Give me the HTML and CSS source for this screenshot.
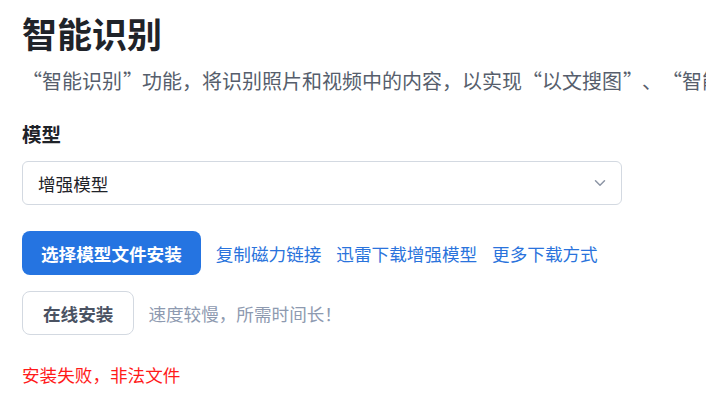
FILE: index.html
```html
<!DOCTYPE html>
<html lang="zh-CN">
<head>
<meta charset="utf-8">
<title>智能识别</title>
<link rel="stylesheet" href="styles.css">
</head>
<body>
<div class="page">
  <h1 class="title">智能识别</h1>
  <p class="desc"><span class="qo">“</span>智能识别<span class="qc">”</span>功能，将识别照片和视频中的内容，以实现<span class="qo">“</span>以文搜图<span class="qc">”</span>、<span class="qo">“</span>智能相册<span class="qc">”</span>等功能。</p>
  <div class="label">模型</div>
  <div class="select">
    <span class="select-value">增强模型</span>
    <svg class="chevron" width="12" height="8" viewBox="0 0 12 8"><path d="M1.5 1.8 L6 6.2 L10.5 1.8" fill="none" stroke="#8c95a5" stroke-width="1.5" stroke-linecap="round" stroke-linejoin="round"/></svg>
  </div>
  <div class="row row-primary">
    <button class="btn btn-primary">选择模型文件安装</button>
    <a class="link">复制磁力链接</a>
    <a class="link">迅雷下载增强模型</a>
    <a class="link">更多下载方式</a>
  </div>
  <div class="row row-secondary">
    <button class="btn btn-outline">在线安装</button>
    <span class="hint">速度较慢，所需时间长！</span>
  </div>
  <div class="error">安装失败，非法文件</div>
</div>
</body>
</html>
```

FILE: styles.css
```css
* { box-sizing: border-box; }
html, body { margin: 0; padding: 0; background: #ffffff; }
body {
  font-family: "Noto Sans CJK SC", "Noto Sans", sans-serif;
  font-size: 17.6px;
  color: #1f2329;
  overflow: hidden;
}
.page {
  padding: 12px 0 0 22px;
  display: flex;
  flex-direction: column;
}
.title {
  margin: 0;
  font-size: 35px;
  font-weight: 700;
  line-height: 41px;
  color: #1f2329;
}
.desc {
  margin: 15px 0 0 0;
  font-size: 20px;
  line-height: 26px;
  color: #565e6c;
  white-space: nowrap;
  overflow: hidden;
}
.qo, .qc {
  display: inline-block;
  width: 1em;
}
.qo { text-align: right; padding-right: 1px; }
.qc { text-align: left; padding-left: 1px; }
.label {
  margin-top: 27px;
  font-size: 19.5px;
  font-weight: 700;
  line-height: 26px;
  color: #1f2329;
}
.select {
  margin-top: 14px;
  width: 600px;
  height: 44px;
  border: 1px solid #d3d9e1;
  border-radius: 6px;
  display: flex;
  align-items: center;
  justify-content: space-between;
  padding: 0 15px 0 15px;
}
.select-value {
  font-size: 17.6px;
  color: #1f2329;
}
.chevron { display: block; }
.row {
  display: flex;
  align-items: center;
}
.row-primary { margin-top: 26px; gap: 15px; }
.row-secondary { margin-top: 16px; gap: 14px; }
.btn {
  font-family: inherit;
  font-size: 17.6px;
  font-weight: 700;
  height: 44px;
  padding: 0 20px;
  border-radius: 8px;
  cursor: pointer;
}
.btn-primary {
  background: #2574e1;
  border: none;
  color: #ffffff;
  padding: 0 19px;
}
.btn-outline {
  background: #ffffff;
  border: 1px solid #d3d9e1;
  color: #4a5262;
}
.link {
  color: #2a73dc;
  font-size: 17.6px;
  text-decoration: none;
  cursor: pointer;
}
.hint {
  color: #8e9ab0;
  font-size: 17.6px;
}
.error {
  margin-top: 27px;
  color: #ff1a1a;
  font-size: 17.6px;
  line-height: 26px;
}
```
